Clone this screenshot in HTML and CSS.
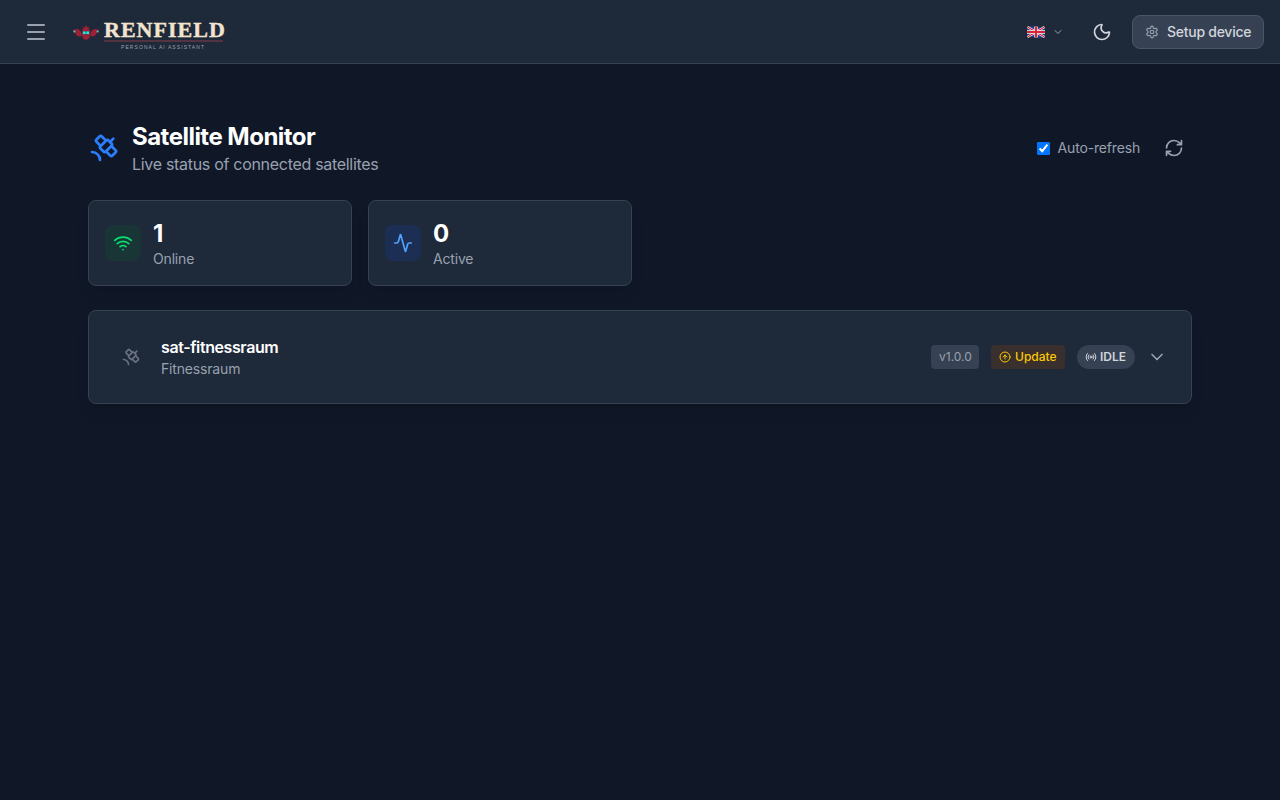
FILE: index.html
```html
<!DOCTYPE html>
<html lang="en">
<head>
    <meta charset="UTF-8">
    <meta name="viewport" content="width=device-width, initial-scale=1.0">
    <title>Renfield - Satellite Monitor</title>
    <link rel="stylesheet" href="styles.css">
</head>
<body>
    <header class="topbar">
        <div class="topbar-left">
            <button class="menu-btn" aria-label="Menu">
                <svg class="icon" width="24" height="24" viewBox="0 0 24 24"><path d="M4 5h16M4 12h16M4 19h16"/></svg>
            </button>
            <svg class="logo" width="154" height="32" viewBox="0 0 154 32" role="img" aria-label="Renfield">
                <!-- bat -->
                <g fill="#9f1f35">
                    <path d="M1 14.5Q1 13 3 13.5Q6 12.2 8.5 15L10 18.5L8.5 20.5Q5 21 3.5 17.5Z"/>
                    <path d="M27 14.5Q27 13 25 13.5Q22 12.2 19.5 15L18 18.5L19.5 20.5Q23 21 24.5 17.5Z"/>
                    <path d="M11 14L11.4 10.6L13 11.5L14.2 8.8L15.2 11.5L16.6 10.6L17 14Z"/>
                    <ellipse cx="14" cy="17.5" rx="4.3" ry="6.3"/>
                </g>
                <rect x="10.6" y="15" width="6.8" height="3.6" rx="1" fill="#1d7078"/>
                <g fill="#2ee6d0">
                    <rect x="11" y="15.4" width="2.6" height="2.6" rx=".6"/>
                    <rect x="14.4" y="15.4" width="2.6" height="2.6" rx=".6"/>
                    <circle cx="2.4" cy="15.6" r="1"/>
                    <circle cx="25.6" cy="15.6" r="1"/>
                </g>
                <text class="logo-name" x="29.1" y="21" textLength="109.8" lengthAdjust="spacing" transform="scale(1.1 1)">RENFIELD</text>
                <rect x="32" y="24.3" width="119" height="1.4" fill="#6b3845"/>
                <text class="logo-tag" x="49" y="33" textLength="83" lengthAdjust="spacing">PERSONAL AI ASSISTANT</text>
            </svg>
        </div>
        <div class="topbar-right">
            <button class="lang-btn" aria-label="Language">
                <svg width="18" height="12" viewBox="0 0 18 12">
                    <path d="M0 1Q4 -.4 9 .8T18 .8V11.2Q14 12.4 9 11.3T0 11.2Z" fill="#26408f"/>
                    <path d="M.5 1L17.5 11M17.5 1L.5 11" stroke="#f1f1f5" stroke-width="2.4"/>
                    <path d="M.5 1L17.5 11M17.5 1L.5 11" stroke="#d22c40" stroke-width="1.2"/>
                    <path d="M9 .6V11.4M0 6H18" stroke="#f1f1f5" stroke-width="3.4"/>
                    <path d="M9 .6V11.4M0 6H18" stroke="#dc2438" stroke-width="2"/>
                </svg>
                <svg class="icon" width="12" height="12" viewBox="0 0 24 24"><path d="m6 9 6 6 6-6"/></svg>
            </button>
            <button class="theme-btn" aria-label="Theme">
                <svg class="icon" width="20" height="20" viewBox="0 0 24 24"><path d="M20.985 12.486a9 9 0 1 1-9.473-9.472c.405-.022.617.46.402.803a6 6 0 0 0 8.268 8.268c.344-.215.825-.004.803.401"/></svg>
            </button>
            <button class="setup-btn">
                <svg class="icon" width="14" height="14" viewBox="0 0 24 24"><path d="M12.22 2h-.44a2 2 0 0 0-2 2v.18a2 2 0 0 1-1 1.73l-.43.25a2 2 0 0 1-2 0l-.15-.08a2 2 0 0 0-2.73.73l-.22.38a2 2 0 0 0 .73 2.73l.15.1a2 2 0 0 1 1 1.72v.51a2 2 0 0 1-1 1.74l-.15.09a2 2 0 0 0-.73 2.73l.22.38a2 2 0 0 0 2.73.73l.15-.08a2 2 0 0 1 2 0l.43.25a2 2 0 0 1 1 1.73V20a2 2 0 0 0 2 2h.44a2 2 0 0 0 2-2v-.18a2 2 0 0 1 1-1.73l.43-.25a2 2 0 0 1 2 0l.15.08a2 2 0 0 0 2.73-.73l.22-.39a2 2 0 0 0-.73-2.73l-.15-.08a2 2 0 0 1-1-1.74v-.5a2 2 0 0 1 1-1.74l.15-.09a2 2 0 0 0 .73-2.73l-.22-.38a2 2 0 0 0-2.73-.73l-.15.08a2 2 0 0 1-2 0l-.43-.25a2 2 0 0 1-1-1.73V4a2 2 0 0 0-2-2z"/><circle cx="12" cy="12" r="3"/></svg>
                <span>Setup device</span>
            </button>
        </div>
    </header>

    <main class="container">
        <div class="page-head">
            <div class="page-title">
                <svg class="icon" width="32" height="32" viewBox="0 0 24 24"><path d="m13.5 6.5-3.148-3.148a1.205 1.205 0 0 0-1.704 0L6.352 5.648a1.205 1.205 0 0 0 0 1.704L9.5 10.5M16.5 7.5 19 5m-1.5 5.5 3.148 3.148a1.205 1.205 0 0 1 0 1.704l-2.296 2.296a1.205 1.205 0 0 1-1.704 0L13.5 14.5M9 21a6 6 0 0 0-6-6"/><path d="M9.352 10.648a1.205 1.205 0 0 0 0 1.704l2.296 2.296a1.205 1.205 0 0 0 1.704 0l4.296-4.296a1.205 1.205 0 0 0 0-1.704l-2.296-2.296a1.205 1.205 0 0 0-1.704 0z"/></svg>
                <div>
                    <h1>Satellite Monitor</h1>
                    <p>Live status of connected satellites</p>
                </div>
            </div>
            <div class="page-actions">
                <label class="auto-refresh">
                    <input type="checkbox" checked>
                    <span>Auto-refresh</span>
                </label>
                <button class="refresh-btn" aria-label="Refresh">
                    <svg class="icon" width="20" height="20" viewBox="0 0 24 24"><path d="M3 12a9 9 0 0 1 9-9 9.75 9.75 0 0 1 6.74 2.74L21 8M21 3v5h-5M21 12a9 9 0 0 1-9 9 9.75 9.75 0 0 1-6.74-2.74L3 16M8 16H3v5"/></svg>
                </button>
            </div>
        </div>

        <div class="stats">
            <div class="card stat">
                <div class="stat-icon green">
                    <svg class="icon" width="20" height="20" viewBox="0 0 24 24"><path d="M12 20h.01M2 8.82a15 15 0 0 1 20 0M5 12.859a10 10 0 0 1 14 0M8.5 16.429a5 5 0 0 1 7 0"/></svg>
                </div>
                <div>
                    <div class="stat-value">1</div>
                    <div class="stat-label">Online</div>
                </div>
            </div>
            <div class="card stat">
                <div class="stat-icon blue">
                    <svg class="icon" width="20" height="20" viewBox="0 0 24 24"><path d="M22 12h-2.48a2 2 0 0 0-1.93 1.46l-2.35 8.36a.25.25 0 0 1-.48 0L9.24 2.18a.25.25 0 0 0-.48 0l-2.35 8.36A2 2 0 0 1 4.49 12H2"/></svg>
                </div>
                <div>
                    <div class="stat-value">0</div>
                    <div class="stat-label">Active</div>
                </div>
            </div>
        </div>

        <div class="card satellite">
            <div class="satellite-info">
                <div class="satellite-icon">
                    <svg class="icon" width="20" height="20" viewBox="0 0 24 24"><path d="m13.5 6.5-3.148-3.148a1.205 1.205 0 0 0-1.704 0L6.352 5.648a1.205 1.205 0 0 0 0 1.704L9.5 10.5M16.5 7.5 19 5m-1.5 5.5 3.148 3.148a1.205 1.205 0 0 1 0 1.704l-2.296 2.296a1.205 1.205 0 0 1-1.704 0L13.5 14.5M9 21a6 6 0 0 0-6-6"/><path d="M9.352 10.648a1.205 1.205 0 0 0 0 1.704l2.296 2.296a1.205 1.205 0 0 0 1.704 0l4.296-4.296a1.205 1.205 0 0 0 0-1.704l-2.296-2.296a1.205 1.205 0 0 0-1.704 0z"/></svg>
                </div>
                <div>
                    <h3>sat-fitnessraum</h3>
                    <p>Fitnessraum</p>
                </div>
            </div>
            <div class="satellite-status">
                <span class="badge version">v1.0.0</span>
                <span class="badge update">
                    <svg class="icon" width="12" height="12" viewBox="0 0 24 24"><circle cx="12" cy="12" r="10"/><path d="m16 12-4-4-4 4M12 16V8"/></svg>
                    <span>Update</span>
                </span>
                <span class="badge idle">
                    <svg class="icon" width="12" height="12" viewBox="0 0 24 24"><path d="M16.247 7.761a6 6 0 0 1 0 8.478M19.075 4.933a10 10 0 0 1 0 14.134M4.925 19.067a10 10 0 0 1 0-14.134M7.753 16.239a6 6 0 0 1 0-8.478"/><circle cx="12" cy="12" r="2"/></svg>
                    <span>IDLE</span>
                </span>
                <svg class="icon chevron" width="20" height="20" viewBox="0 0 24 24"><path d="m6 9 6 6 6-6"/></svg>
            </div>
        </div>
    </main>
</body>
</html>
```
FILE: styles.css
```css
* {
    box-sizing: border-box;
    margin: 0;
    padding: 0;
}

body {
    font-family: Inter, 'Liberation Sans', sans-serif;
    background-color: #101828;
    color: #fff;
    min-height: 100vh;
}

button {
    display: flex;
    align-items: center;
    background: none;
    border: none;
    font-family: inherit;
    cursor: pointer;
}

.icon {
    display: block;
    flex-shrink: 0;
    fill: none;
    stroke: currentColor;
    stroke-width: 2;
    stroke-linecap: round;
    stroke-linejoin: round;
}

/* Top bar */
.topbar {
    display: flex;
    align-items: center;
    justify-content: space-between;
    height: 64px;
    padding: 0 16px;
    background-color: #1e2939;
    border-bottom: 1px solid #364153;
}

.topbar-left,
.topbar-right {
    display: flex;
    align-items: center;
}

.topbar-left {
    gap: 16px;
}

.menu-btn {
    padding: 8px;
    color: #99a1af;
}

.logo {
    overflow: visible;
}

.logo-name {
    font-family: 'Liberation Serif', serif;
    font-size: 20px;
    font-weight: bold;
    fill: #f2e4cf;
    stroke: #f2e4cf;
    stroke-width: 0.35px;
}

.logo-tag {
    font-family: 'Liberation Sans', sans-serif;
    font-size: 5px;
    fill: #99a1af;
}

.lang-btn {
    gap: 7px;
    padding: 8px;
    color: #99a1af;
}

.theme-btn {
    margin: 0 12px;
    padding: 8px;
    color: #d1d5dc;
}

.setup-btn {
    gap: 8px;
    height: 34px;
    width: 132px;
    padding: 0 12px;
    background-color: #364153;
    border: 1px solid #4a5565;
    border-radius: 8px;
    color: #d1d5dc;
    font-size: 14px;
    font-weight: 500;
    letter-spacing: -0.26px;
    white-space: nowrap;
}

.setup-btn .icon {
    color: #99a1af;
}

/* Page */
.container {
    max-width: 1104px;
    margin: 0 auto;
    padding-top: 56px;
}

.page-head,
.page-title,
.page-actions,
.auto-refresh {
    display: flex;
    align-items: center;
}

.page-head {
    justify-content: space-between;
    margin-bottom: 24px;
}

.page-title {
    gap: 12px;
}

.page-title .icon {
    color: #2b7fff;
}

h1 {
    height: 32px;
    font-size: 24px;
    line-height: 34px;
    font-weight: 750;
    letter-spacing: -0.52px;
}

.page-title p {
    color: #99a1af;
    font-size: 16px;
    line-height: 24px;
    letter-spacing: -0.3px;
}

.page-actions {
    gap: 16px;
}

.auto-refresh {
    gap: 8px;
    color: #99a1af;
    font-size: 14px;
    line-height: 20px;
    letter-spacing: -0.17px;
}

.auto-refresh input {
    width: 13px;
    height: 13px;
    accent-color: #0075ff;
}

.refresh-btn {
    padding: 8px;
    color: #99a1af;
}

.card {
    background-color: #1e2939;
    border: 1px solid #364153;
    border-radius: 8px;
    box-shadow: 0 10px 15px -3px rgba(0, 0, 0, 0.1), 0 4px 6px -4px rgba(0, 0, 0, 0.1);
}

/* Stats */
.stats {
    display: grid;
    grid-template-columns: repeat(4, 1fr);
    gap: 16px;
    margin-bottom: 24px;
}

.stat {
    display: flex;
    align-items: center;
    gap: 12px;
    padding: 16px;
}

.stat-icon {
    padding: 8px;
    border-radius: 8px;
}

.stat-icon.green {
    background-color: #1a3535;
    color: #05df72;
}

.stat-icon.blue {
    background-color: #1c2e54;
    color: #51a2ff;
}

.stat-value {
    height: 32px;
    font-size: 24px;
    line-height: 34px;
    font-weight: 750;
}

.stat-label {
    color: #99a1af;
    font-size: 14px;
    line-height: 20px;
    letter-spacing: -0.17px;
}

/* Satellite row */
.satellite {
    display: flex;
    align-items: center;
    justify-content: space-between;
    padding: 24px;
}

.satellite-info,
.satellite-status {
    display: flex;
    align-items: center;
    gap: 12px;
}

.satellite-icon {
    padding: 8px;
    color: #6a7282;
}

.satellite h3 {
    font-size: 16px;
    line-height: 24px;
    font-weight: 600;
    letter-spacing: -0.4px;
}

.satellite p {
    color: #99a1af;
    font-size: 14px;
    line-height: 20px;
    letter-spacing: -0.17px;
}

.badge {
    display: flex;
    align-items: center;
    gap: 4px;
    height: 24px;
    padding: 0 8px;
    border-radius: 4px;
    font-size: 12px;
    line-height: 16px;
    white-space: nowrap;
}

.version {
    width: 48px;
    background-color: #364153;
    color: #99a1af;
}

.update {
    width: 74px;
    background-color: #392f2c;
    color: #fdc700;
    font-weight: 500;
}

.idle {
    gap: 3px;
    width: 58px;
    background-color: #364153;
    border-radius: 12px;
    color: #d1d5dc;
    font-weight: 600;
}

.chevron {
    color: #99a1af;
}
```
